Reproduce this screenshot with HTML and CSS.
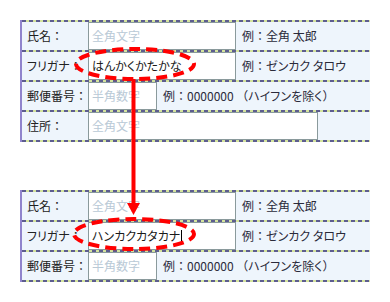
FILE: index.html
```html
<!DOCTYPE html>
<html lang="ja">
<head>
<meta charset="utf-8">
<link rel="stylesheet" href="styles.css">
</head>
<body>
<div class="page">
  <div class="form">
    <div class="row">
      <div class="label">氏名<span class="fw">：</span></div>
      <div class="field w-name"><span class="ph">全角文字</span></div>
      <div class="hint">例<span class="fw">：</span>全角 太郎</div>
    </div>
    <div class="row">
      <div class="label">フリガナ<span class="fw">：</span></div>
      <div class="field w-name">はんかくかたかな</div>
      <div class="hint">例<span class="fw">：</span>ゼンカク タロウ</div>
    </div>
    <div class="row">
      <div class="label">郵便番号<span class="fw">：</span></div>
      <div class="field w-zip"><span class="ph">半角数字</span></div>
      <div class="hint">例<span class="fw">：</span>0000000 <span class="fw">（</span>ハイフンを除く<span class="fw">）</span></div>
    </div>
    <div class="row">
      <div class="label">住所<span class="fw">：</span></div>
      <div class="field w-addr"><span class="ph">全角文字</span></div>
      <div class="hint"></div>
    </div>
  </div>

  <div class="form form-after">
    <div class="row">
      <div class="label">氏名<span class="fw">：</span></div>
      <div class="field w-name"><span class="ph">全角文字</span></div>
      <div class="hint">例<span class="fw">：</span>全角 太郎</div>
    </div>
    <div class="row">
      <div class="label">フリガナ<span class="fw">：</span></div>
      <div class="field w-name">ハンカクカタカナ<span class="caret"></span></div>
      <div class="hint">例<span class="fw">：</span>ゼンカク タロウ</div>
    </div>
    <div class="row">
      <div class="label">郵便番号<span class="fw">：</span></div>
      <div class="field w-zip"><span class="ph">半角数字</span></div>
      <div class="hint">例<span class="fw">：</span>0000000 <span class="fw">（</span>ハイフンを除く<span class="fw">）</span></div>
    </div>
  </div>

  <svg class="overlay" width="390" height="302" viewBox="0 0 390 302">
    <ellipse cx="135" cy="64" rx="59" ry="15" fill="none" stroke="#ff0000" stroke-width="4" stroke-dasharray="11 6" stroke-dashoffset="3"/>
    <line x1="133.5" y1="79" x2="133.5" y2="205" stroke="#ff0000" stroke-width="4"/>
    <polygon points="127,203 140,203 133.5,215" fill="#ff0000"/>
    <ellipse cx="134" cy="234" rx="60" ry="15" fill="none" stroke="#ff0000" stroke-width="4" stroke-dasharray="11 6" stroke-dashoffset="3"/>
  </svg>
</div>
</body>
</html>
```

FILE: styles.css
```css
html, body {
  margin: 0;
  padding: 0;
  background: #ffffff;
}

.page {
  position: relative;
  width: 390px;
  height: 302px;
  padding: 20px 0 0 20px;
  box-sizing: border-box;
  font-family: "Noto Sans CJK JP", "Noto Sans", sans-serif;
  font-size: 12px;
  font-feature-settings: "palt";
  color: #222222;
  overflow: hidden;
}

.fw {
  font-feature-settings: normal;
}

.form {
  width: 350px;
  box-sizing: border-box;
  border-left: 2px solid #9084cc;
  padding-top: 2px;
  background: repeating-linear-gradient(90deg, #5d5d8f 0 4px, #d4e49c 4px 7px) top left / 100% 2px no-repeat;
}

.form-after {
  margin-top: 48px;
}

.row {
  display: flex;
  height: 30px;
  padding-bottom: 2px;
  box-sizing: border-box;
  background: repeating-linear-gradient(90deg, #5d5d8f 0 4px, #d4e49c 4px 7px) bottom left / 100% 2px no-repeat;
}

.label {
  width: 66px;
  flex: none;
  background: #eef5fc;
  padding-left: 5px;
  box-sizing: border-box;
  line-height: 28px;
  white-space: nowrap;
}

.field {
  flex: none;
  height: 28px;
  box-sizing: border-box;
  background: #ffffff;
  border: 1px solid #8a9a9c;
  padding-left: 3px;
  line-height: 26px;
  white-space: nowrap;
  color: #1a1a1a;
}

.w-name { width: 148px; }
.w-zip { width: 69px; }
.w-addr { width: 230px; }

.ph {
  color: #b9c9d6;
}

.caret {
  display: inline-block;
  width: 1px;
  height: 14px;
  background: #000000;
  vertical-align: -3px;
  margin-left: 1px;
}

.hint {
  flex: 1;
  background: #eef5fc;
  padding-left: 6px;
  line-height: 28px;
  white-space: nowrap;
  color: #2a2a3a;
}

.overlay {
  position: absolute;
  left: 0;
  top: 0;
  pointer-events: none;
}
```
